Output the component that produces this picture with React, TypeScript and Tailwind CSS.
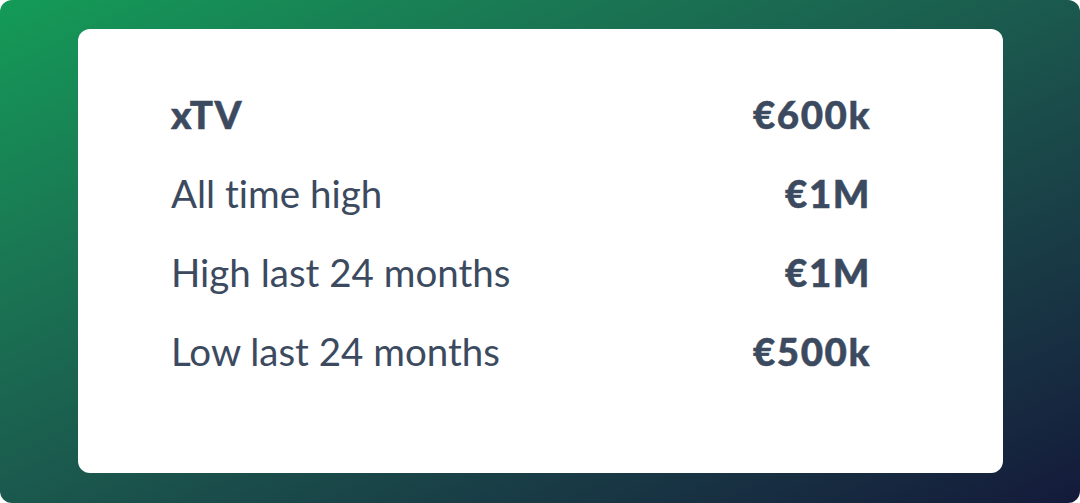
import React from 'react';

const rows = [
  { label: 'xTV', value: '€600k', bold: true },
  { label: 'All time high', value: '€1M' },
  { label: 'High last 24 months', value: '€1M' },
  { label: 'Low last 24 months', value: '€500k' },
];

const strong = 'font-black tracking-[0.04em] [-webkit-text-stroke:0.5px_#3c4a60]';

const App = () => {
  return (
    <div className="w-[1080px] h-[503px] bg-white">
      <div className="w-full h-full rounded-[12px] bg-gradient-to-br from-[#139b57] to-[#141a3a] pl-[78px] pr-[77px] pt-[29px] pb-[30px]">
        <div
          className="h-full rounded-[12px] bg-white pl-[93px] pr-[132px] pt-[64px] flex flex-col gap-[37px] text-[#3c4a60] [font-variant-ligatures:none]"
          style={{ fontFamily: 'Lato, "Open Sans", sans-serif' }}
        >
          {rows.map((row) => (
            <div key={row.label} className="flex items-center justify-between text-[38.5px] leading-[42px]">
              <span className={row.bold ? strong : ''}>{row.label}</span>
              <span className={strong}>{row.value}</span>
            </div>
          ))}
        </div>
      </div>
    </div>
  );
};

export default App;
